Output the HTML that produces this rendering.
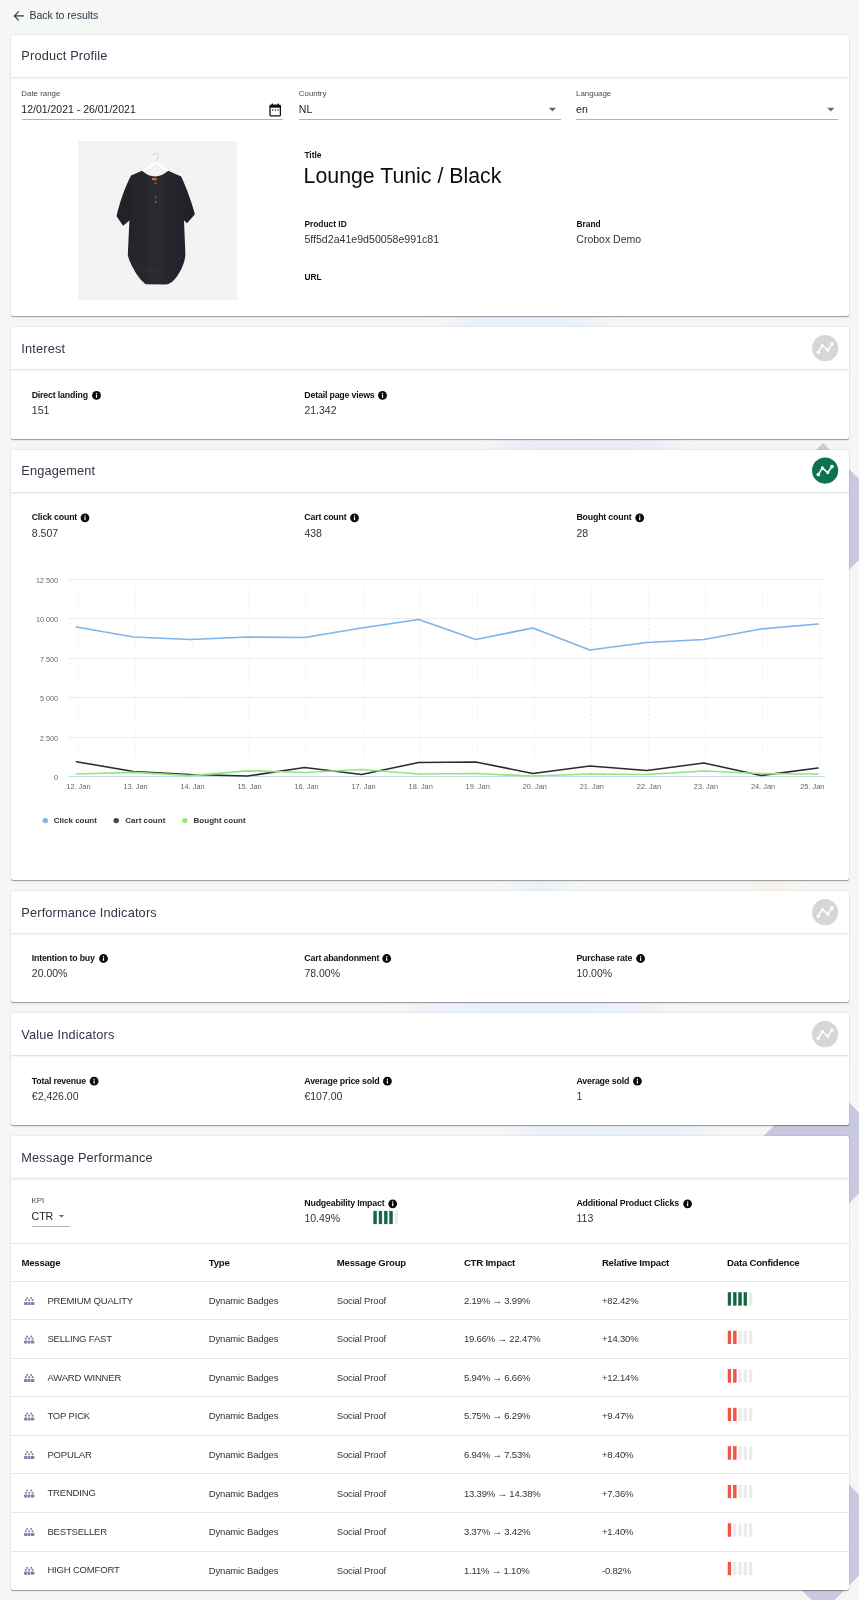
<!DOCTYPE html>
<html lang="en"><head><meta charset="utf-8"><title>Product Profile</title>
<style>
*{box-sizing:border-box}
html,body{margin:0;padding:0}
body{width:859px;height:1600px;position:relative;overflow:hidden;background:#f5f7f7;font-family:"Liberation Sans",sans-serif;color:#333}
.bg{position:absolute;left:0;top:0;width:859px;height:1600px}
.t{position:absolute;white-space:nowrap;line-height:1;display:block;opacity:.995}
.card{position:absolute;left:11px;width:838px;background:#fff;border-radius:2.5px;box-shadow:0 1.6px .8px -.8px rgba(0,0,0,.22),0 .8px .9px 0 rgba(0,0,0,.12),0 .75px 2.6px 0 rgba(0,0,0,.10)}
.card header{position:absolute;left:0;top:0;width:100%;height:43px;border-bottom:1px solid #e4e4e4;box-shadow:0 1.5px 1.5px rgba(0,0,0,.035)}
.card h2{margin:0;font-weight:400;color:#2d3648;letter-spacing:.17px}
.nav{color:#2d3648}
.lbl{font-weight:700;color:#111;letter-spacing:-.18px}
.l2{letter-spacing:0}
.val{color:#333}
.fl{color:#484848}
.fv{color:#222}
.ul{position:absolute;height:1px;background:#b2b2b2}
.ico{position:absolute;display:block}
.th{font-weight:700;color:#111;letter-spacing:-.22px}
.td{color:#333;letter-spacing:-.17px}
.row{position:absolute;left:0;width:100%;height:1px;background:#e6e6e6}
.title{color:#0c0c0c}
svg text{opacity:.995}
</style></head>
<body>
<svg class="bg" width="859" height="1600" viewBox="0 0 859 1600">
<defs><filter id="bb" x="-50%" y="-50%" width="200%" height="200%"><feGaussianBlur stdDeviation="14"/></filter></defs>
<g filter="url(#bb)"><ellipse cx="525" cy="321" rx="80" ry="22" fill="#e9f0f9"/><ellipse cx="585" cy="444" rx="95" ry="22" fill="#e9ebf6"/><ellipse cx="540" cy="885" rx="22" ry="20" fill="#e9f0f9"/><ellipse cx="770" cy="885" rx="22" ry="20" fill="#f7f1e6"/><ellipse cx="535" cy="1007" rx="135" ry="22" fill="#e9f0f9"/><ellipse cx="610" cy="1130" rx="100" ry="22" fill="#e9eff8"/></g>
<polygon points="823,443.0 899.5,519.5 823,596.0 746.5,519.5" fill="#c8c8df"/>
<polygon points="823,1076.5 899.5,1153 823,1229.5 746.5,1153" fill="#c8c8df"/>
<polygon points="823,1458.5 899.5,1535 823,1611.5 746.5,1535" fill="#c8c8df"/>
</svg>
<div class="nav">
<svg class="ico" style="left:13px;top:10px" width="13" height="13" viewBox="-0.50 -0.40 13 13"><path d="M10.4 5.5H1.2M5.3 1 0.9 5.5 5.3 10" fill="none" stroke="#2d3648" stroke-width="1.15"/></svg>
<span class="t nav" style="left:29.40px;top:10px;font-size:10.5px;">Back to results</span>
</div>
<section class="card" style="top:35px;height:281px">
<header><h2 class="t" style="left:10.30px;top:15px;font-size:12.75px;">Product Profile</h2></header>
<span class="t fl" style="left:10.30px;top:55px;font-size:7.9px;">Date range</span>
<span class="t fv" style="left:10.30px;top:69px;font-size:10.5px;">12/01/2021 - 26/01/2021</span>
<div class="ul" style="left:10.6px;top:84px;width:261.2px"></div>
<span class="t fl" style="left:287.80px;top:55px;font-size:7.9px;">Country</span>
<span class="t fv" style="left:287.80px;top:69px;font-size:10.5px;">NL</span>
<div class="ul" style="left:288.1px;top:84px;width:261.5px"></div>
<span class="t fl" style="left:565.10px;top:55px;font-size:7.9px;">Language</span>
<span class="t fv" style="left:565.10px;top:69px;font-size:10.5px;">en</span>
<div class="ul" style="left:565.4px;top:84px;width:261.9px"></div>
<svg class="ico" style="left:258px;top:68px" width="14" height="15" viewBox="0.00 0.00 14 15"><rect x="1" y="2.1" width="10.4" height="10.8" rx="1.2" fill="none" stroke="#111" stroke-width="1.3"/><rect x="1" y="2.1" width="10.4" height="2.6" fill="#111"/><rect x="2.7" y="0.5" width="1.2" height="2.5" fill="#111"/><rect x="8.6" y="0.5" width="1.2" height="2.5" fill="#111"/><circle cx="3.7" cy="7.1" r=".75" fill="#111"/><circle cx="6.5" cy="7.1" r=".75" fill="#111"/><circle cx="9.1" cy="7.1" r=".75" fill="#111"/></svg>
<svg class="ico" style="left:537px;top:72px" width="10" height="6" viewBox="-0.90 -0.70 10 6"><path d="M0 0H7.2L3.6 3.7Z" fill="#666"/></svg>
<svg class="ico" style="left:816px;top:72px" width="9" height="6" viewBox="-0.20 -0.70 9 6"><path d="M0 0H7.2L3.6 3.7Z" fill="#666"/></svg>
<svg class="ico" style="left:67px;top:106px" width="159" height="159" viewBox="0 0 159 159"><defs><linearGradient id="tg" x1="0" x2="1" y1="0" y2="0"><stop offset="0" stop-color="#202126"/><stop offset=".5" stop-color="#2a2b31"/><stop offset="1" stop-color="#1f2025"/></linearGradient><filter id="bl" x="-5%" y="-5%" width="110%" height="110%"><feGaussianBlur stdDeviation=".45"/></filter></defs><rect width="159" height="159" fill="#f3f3f3"/><g filter="url(#bl)"><path d="M73.4 15.2C74 12.4 80 11.8 80.2 14.2 80.4 17 78.5 18.5 78.1 21.3" fill="none" stroke="#c4c4c4" stroke-width=".8"/><path d="M64.5 30 78.1 21.5 90.2 30" fill="none" stroke="#fff" stroke-width="1.8" stroke-linejoin="round"/><path d="M64 29.7Q70 35 77 35.6 84 35 90.2 29.7L103.2 35.4C109 48 114 62 116.9 73.2L109 82.3 106 79.3 107.4 114C106.5 124 101 134 94.9 140.2Q91 143.4 87.5 143.4L67.6 143.2Q63 140 59.2 134C55 127 51 120 49.8 114L51.4 79.5 45.1 84.7 38.5 75.3C42 60 47 46 53 34.4Z" fill="url(#tg)"/><path d="M50.3 114C58 126 68 131 77 130.6 88 130 98 124 105 112" fill="none" stroke="#34353b" stroke-width=".7"/><rect x="73.9" y="36.9" width="4.8" height="2.3" rx=".5" fill="#e0672c"/><circle cx="77.6" cy="42.3" r=".95" fill="#7d705a"/><circle cx="77.6" cy="56.1" r=".95" fill="#7d705a"/><circle cx="77.6" cy="60.9" r=".95" fill="#7d705a"/></g></svg>
<span class="t lbl l2" style="left:293.40px;top:116px;font-size:8.4px;">Title</span>
<span class="t title" style="left:292.60px;top:131px;font-size:21.3px;">Lounge Tunic / Black</span>
<span class="t lbl l2" style="left:293.40px;top:185px;font-size:8.4px;">Product ID</span>
<span class="t val" style="left:293.40px;top:199px;font-size:10.6px;">5ff5d2a41e9d50058e991c81</span>
<span class="t lbl l2" style="left:565.50px;top:185px;font-size:8.4px;">Brand</span>
<span class="t val" style="left:565.30px;top:199px;font-size:10.5px;">Crobox Demo</span>
<span class="t lbl l2" style="left:293.40px;top:238px;font-size:8.4px;">URL</span>
</section>
<section class="card" style="top:327px;height:112px"><header><h2 class="t" style="left:10.30px;top:16px;font-size:12.75px;">Interest</h2><svg class="ico" style="left:801px;top:8px" width="28" height="28" viewBox="-0.00 -0.10 28 28"><circle cx="13.1" cy="13.1" r="13.1" fill="#d6d6d6"/><polyline points="6.30,17.10 10.40,10.40 15.80,15.10 20.00,9.00" fill="none" stroke="#fff" stroke-width="1.55" stroke-linejoin="round"/><circle cx="6.30" cy="17.10" r="1.8" fill="#fff"/><circle cx="10.40" cy="10.40" r="1.55" fill="#fff"/><circle cx="15.80" cy="15.10" r="1.55" fill="#fff"/><circle cx="20.00" cy="9.00" r="1.8" fill="#fff"/></svg></header>
<span class="t lbl" style="left:20.70px;top:64px;font-size:8.8px;">Direct landing</span><svg class="ico" style="left:81px;top:64px" width="10" height="10" viewBox="-0.10 -0.00 10 10"><circle cx="4.4" cy="4.4" r="4.4" fill="#0b0b0b"/><rect x="3.8" y="3.7" width="1.2" height="3" fill="#fff"/><rect x="3.8" y="1.9" width="1.2" height="1.2" fill="#fff"/></svg><span class="t val" style="left:20.80px;top:78px;font-size:10.5px;">151</span>
<span class="t lbl" style="left:293.30px;top:64px;font-size:8.8px;">Detail page views</span><svg class="ico" style="left:367px;top:64px" width="10" height="10" viewBox="-0.10 -0.00 10 10"><circle cx="4.4" cy="4.4" r="4.4" fill="#0b0b0b"/><rect x="3.8" y="3.7" width="1.2" height="3" fill="#fff"/><rect x="3.8" y="1.9" width="1.2" height="1.2" fill="#fff"/></svg><span class="t val" style="left:293.40px;top:78px;font-size:10.5px;">21.342</span>
</section>
<section class="card" style="top:450px;height:430px"><header><h2 class="t" style="left:10.30px;top:15px;font-size:12.75px;">Engagement</h2><svg class="ico" style="left:801px;top:7px" width="28" height="28" viewBox="-0.00 -0.50 28 28"><circle cx="13.1" cy="13.1" r="13.1" fill="#0e7150"/><polyline points="6.30,17.10 10.40,10.40 15.80,15.10 20.00,9.00" fill="none" stroke="#fff" stroke-width="1.55" stroke-linejoin="round"/><circle cx="6.30" cy="17.10" r="1.8" fill="#fff"/><circle cx="10.40" cy="10.40" r="1.55" fill="#fff"/><circle cx="15.80" cy="15.10" r="1.55" fill="#fff"/><circle cx="20.00" cy="9.00" r="1.8" fill="#fff"/></svg></header>
<span class="t lbl" style="left:20.70px;top:63px;font-size:8.8px;">Click count</span><svg class="ico" style="left:69px;top:63px" width="11" height="11" viewBox="-0.60 -0.40 11 11"><circle cx="4.4" cy="4.4" r="4.4" fill="#0b0b0b"/><rect x="3.8" y="3.7" width="1.2" height="3" fill="#fff"/><rect x="3.8" y="1.9" width="1.2" height="1.2" fill="#fff"/></svg><span class="t val" style="left:20.80px;top:78px;font-size:10.5px;">8.507</span>
<span class="t lbl" style="left:293.30px;top:63px;font-size:8.8px;">Cart count</span><svg class="ico" style="left:339px;top:63px" width="10" height="11" viewBox="-0.10 -0.40 10 11"><circle cx="4.4" cy="4.4" r="4.4" fill="#0b0b0b"/><rect x="3.8" y="3.7" width="1.2" height="3" fill="#fff"/><rect x="3.8" y="1.9" width="1.2" height="1.2" fill="#fff"/></svg><span class="t val" style="left:293.40px;top:78px;font-size:10.5px;">438</span>
<span class="t lbl" style="left:565.40px;top:63px;font-size:8.8px;">Bought count</span><svg class="ico" style="left:624px;top:63px" width="11" height="11" viewBox="-0.30 -0.40 11 11"><circle cx="4.4" cy="4.4" r="4.4" fill="#0b0b0b"/><rect x="3.8" y="3.7" width="1.2" height="3" fill="#fff"/><rect x="3.8" y="1.9" width="1.2" height="1.2" fill="#fff"/></svg><span class="t val" style="left:565.50px;top:78px;font-size:10.5px;">28</span>
<svg class="ico" style="left:0;top:110px" width="838" height="290" viewBox="11 560 838 290" font-family="Liberation Sans, sans-serif"><line x1="68.4" x2="825" y1="737.5" y2="737.5" stroke="#ececec" stroke-width="1"/><line x1="68.4" x2="825" y1="697.5" y2="697.5" stroke="#ececec" stroke-width="1"/><line x1="68.4" x2="825" y1="658.5" y2="658.5" stroke="#ececec" stroke-width="1"/><line x1="68.4" x2="825" y1="618.5" y2="618.5" stroke="#ececec" stroke-width="1"/><line x1="68.4" x2="825" y1="579.5" y2="579.5" stroke="#ececec" stroke-width="1"/><line x1="78.0" x2="78.0" y1="579" y2="776" stroke="#e9e9e9" stroke-width="1" stroke-dasharray="1.5 3"/><line x1="135.1" x2="135.1" y1="579" y2="776" stroke="#e9e9e9" stroke-width="1" stroke-dasharray="1.5 3"/><line x1="192.1" x2="192.1" y1="579" y2="776" stroke="#e9e9e9" stroke-width="1" stroke-dasharray="1.5 3"/><line x1="249.1" x2="249.1" y1="579" y2="776" stroke="#e9e9e9" stroke-width="1" stroke-dasharray="1.5 3"/><line x1="306.2" x2="306.2" y1="579" y2="776" stroke="#e9e9e9" stroke-width="1" stroke-dasharray="1.5 3"/><line x1="363.2" x2="363.2" y1="579" y2="776" stroke="#e9e9e9" stroke-width="1" stroke-dasharray="1.5 3"/><line x1="420.3" x2="420.3" y1="579" y2="776" stroke="#e9e9e9" stroke-width="1" stroke-dasharray="1.5 3"/><line x1="477.3" x2="477.3" y1="579" y2="776" stroke="#e9e9e9" stroke-width="1" stroke-dasharray="1.5 3"/><line x1="534.4" x2="534.4" y1="579" y2="776" stroke="#e9e9e9" stroke-width="1" stroke-dasharray="1.5 3"/><line x1="591.4" x2="591.4" y1="579" y2="776" stroke="#e9e9e9" stroke-width="1" stroke-dasharray="1.5 3"/><line x1="648.5" x2="648.5" y1="579" y2="776" stroke="#e9e9e9" stroke-width="1" stroke-dasharray="1.5 3"/><line x1="705.5" x2="705.5" y1="579" y2="776" stroke="#e9e9e9" stroke-width="1" stroke-dasharray="1.5 3"/><line x1="762.6" x2="762.6" y1="579" y2="776" stroke="#e9e9e9" stroke-width="1" stroke-dasharray="1.5 3"/><line x1="819.6" x2="819.6" y1="579" y2="776" stroke="#e9e9e9" stroke-width="1" stroke-dasharray="1.5 3"/><line x1="68.4" x2="825" y1="776.5" y2="776.5" stroke="#ccd6eb" stroke-width="1"/><text x="57.9" y="779.8" text-anchor="end" font-size="7.2" fill="#666">0</text><text x="57.9" y="740.8" text-anchor="end" font-size="7.2" fill="#666">2 500</text><text x="57.9" y="700.8" text-anchor="end" font-size="7.2" fill="#666">5 000</text><text x="57.9" y="661.8" text-anchor="end" font-size="7.2" fill="#666">7 500</text><text x="57.9" y="621.8" text-anchor="end" font-size="7.2" fill="#666">10 000</text><text x="57.9" y="582.8" text-anchor="end" font-size="7.2" fill="#666">12 500</text><text x="78.4" y="789" text-anchor="middle" font-size="7.4" fill="#666">12. Jan</text><text x="135.5" y="789" text-anchor="middle" font-size="7.4" fill="#666">13. Jan</text><text x="192.5" y="789" text-anchor="middle" font-size="7.4" fill="#666">14. Jan</text><text x="249.5" y="789" text-anchor="middle" font-size="7.4" fill="#666">15. Jan</text><text x="306.6" y="789" text-anchor="middle" font-size="7.4" fill="#666">16. Jan</text><text x="363.6" y="789" text-anchor="middle" font-size="7.4" fill="#666">17. Jan</text><text x="420.7" y="789" text-anchor="middle" font-size="7.4" fill="#666">18. Jan</text><text x="477.7" y="789" text-anchor="middle" font-size="7.4" fill="#666">19. Jan</text><text x="534.8" y="789" text-anchor="middle" font-size="7.4" fill="#666">20. Jan</text><text x="591.8" y="789" text-anchor="middle" font-size="7.4" fill="#666">21. Jan</text><text x="648.9" y="789" text-anchor="middle" font-size="7.4" fill="#666">22. Jan</text><text x="705.9" y="789" text-anchor="middle" font-size="7.4" fill="#666">23. Jan</text><text x="763.0" y="789" text-anchor="middle" font-size="7.4" fill="#666">24. Jan</text><text x="824.4" y="789" text-anchor="end" font-size="7.4" fill="#666">25. Jan</text><polyline points="76.4,627.0 133.5,637.0 190.5,639.5 247.5,637.0 304.6,637.5 361.6,628.0 418.7,619.5 475.7,639.5 532.8,628.0 589.8,650.0 646.9,642.5 703.9,639.5 761.0,629.0 818.0,624.0" fill="none" stroke="#7cb5ec" stroke-width="1.75" stroke-linejoin="round" stroke-linecap="round"/><polyline points="76.4,761.7 133.5,771.5 190.5,774.5 247.5,776.1 304.6,767.5 361.6,774.5 418.7,762.5 475.7,762.0 532.8,773.5 589.8,766.0 646.9,770.5 703.9,763.0 761.0,775.5 818.0,768.0" fill="none" stroke="#2b2b2e" stroke-width="1.55" stroke-linejoin="round" stroke-linecap="round"/><polyline points="76.4,774.0 133.5,772.4 190.5,775.7 247.5,770.8 304.6,772.5 361.6,769.5 418.7,774.0 475.7,773.5 532.8,776.0 589.8,774.0 646.9,774.5 703.9,771.0 761.0,773.5 818.0,774.0" fill="none" stroke="#8ee87a" stroke-width="1.75" stroke-linejoin="round" stroke-linecap="round"/><circle cx="45.3" cy="820.6" r="2.7" fill="#7cb5ec"/><text x="53.800000000000004" y="823" font-size="8" font-weight="700" fill="#333">Click count</text><circle cx="116.2" cy="820.6" r="2.7" fill="#434348"/><text x="125.3" y="823" font-size="8" font-weight="700" fill="#333">Cart count</text><circle cx="184.8" cy="820.6" r="2.7" fill="#90ed7d"/><text x="193.6" y="823" font-size="8" font-weight="700" fill="#333">Bought count</text></svg>
</section>
<section class="card" style="top:891px;height:111px"><header><h2 class="t" style="left:10.30px;top:16px;font-size:12.75px;">Performance Indicators</h2><svg class="ico" style="left:801px;top:8px" width="28" height="28" viewBox="-0.00 -0.10 28 28"><circle cx="13.1" cy="13.1" r="13.1" fill="#d6d6d6"/><polyline points="6.30,17.10 10.40,10.40 15.80,15.10 20.00,9.00" fill="none" stroke="#fff" stroke-width="1.55" stroke-linejoin="round"/><circle cx="6.30" cy="17.10" r="1.8" fill="#fff"/><circle cx="10.40" cy="10.40" r="1.55" fill="#fff"/><circle cx="15.80" cy="15.10" r="1.55" fill="#fff"/><circle cx="20.00" cy="9.00" r="1.8" fill="#fff"/></svg></header>
<span class="t lbl" style="left:20.70px;top:63px;font-size:8.8px;">Intention to buy</span><svg class="ico" style="left:88px;top:63px" width="10" height="10" viewBox="-0.10 -0.10 10 10"><circle cx="4.4" cy="4.4" r="4.4" fill="#0b0b0b"/><rect x="3.8" y="3.7" width="1.2" height="3" fill="#fff"/><rect x="3.8" y="1.9" width="1.2" height="1.2" fill="#fff"/></svg><span class="t val" style="left:20.80px;top:77px;font-size:10.5px;">20.00%</span>
<span class="t lbl" style="left:293.30px;top:63px;font-size:8.8px;">Cart abandonment</span><svg class="ico" style="left:371px;top:63px" width="11" height="10" viewBox="-0.30 -0.10 11 10"><circle cx="4.4" cy="4.4" r="4.4" fill="#0b0b0b"/><rect x="3.8" y="3.7" width="1.2" height="3" fill="#fff"/><rect x="3.8" y="1.9" width="1.2" height="1.2" fill="#fff"/></svg><span class="t val" style="left:293.40px;top:77px;font-size:10.5px;">78.00%</span>
<span class="t lbl" style="left:565.40px;top:63px;font-size:8.8px;">Purchase rate</span><svg class="ico" style="left:625px;top:63px" width="11" height="10" viewBox="-0.20 -0.10 11 10"><circle cx="4.4" cy="4.4" r="4.4" fill="#0b0b0b"/><rect x="3.8" y="3.7" width="1.2" height="3" fill="#fff"/><rect x="3.8" y="1.9" width="1.2" height="1.2" fill="#fff"/></svg><span class="t val" style="left:565.50px;top:77px;font-size:10.5px;">10.00%</span>
</section>
<section class="card" style="top:1013px;height:112px"><header><h2 class="t" style="left:10.30px;top:16px;font-size:12.75px;">Value Indicators</h2><svg class="ico" style="left:801px;top:8px" width="28" height="28" viewBox="-0.00 -0.10 28 28"><circle cx="13.1" cy="13.1" r="13.1" fill="#d6d6d6"/><polyline points="6.30,17.10 10.40,10.40 15.80,15.10 20.00,9.00" fill="none" stroke="#fff" stroke-width="1.55" stroke-linejoin="round"/><circle cx="6.30" cy="17.10" r="1.8" fill="#fff"/><circle cx="10.40" cy="10.40" r="1.55" fill="#fff"/><circle cx="15.80" cy="15.10" r="1.55" fill="#fff"/><circle cx="20.00" cy="9.00" r="1.8" fill="#fff"/></svg></header>
<span class="t lbl" style="left:20.70px;top:64px;font-size:8.8px;">Total revenue</span><svg class="ico" style="left:78px;top:63px" width="11" height="11" viewBox="-0.70 -0.80 11 11"><circle cx="4.4" cy="4.4" r="4.4" fill="#0b0b0b"/><rect x="3.8" y="3.7" width="1.2" height="3" fill="#fff"/><rect x="3.8" y="1.9" width="1.2" height="1.2" fill="#fff"/></svg><span class="t val" style="left:20.80px;top:78px;font-size:10.5px;">€2,426.00</span>
<span class="t lbl" style="left:293.30px;top:64px;font-size:8.8px;">Average price sold</span><svg class="ico" style="left:372px;top:63px" width="10" height="11" viewBox="-0.00 -0.80 10 11"><circle cx="4.4" cy="4.4" r="4.4" fill="#0b0b0b"/><rect x="3.8" y="3.7" width="1.2" height="3" fill="#fff"/><rect x="3.8" y="1.9" width="1.2" height="1.2" fill="#fff"/></svg><span class="t val" style="left:293.40px;top:78px;font-size:10.5px;">€107.00</span>
<span class="t lbl" style="left:565.40px;top:64px;font-size:8.8px;">Average sold</span><svg class="ico" style="left:622px;top:63px" width="10" height="11" viewBox="-0.00 -0.80 10 11"><circle cx="4.4" cy="4.4" r="4.4" fill="#0b0b0b"/><rect x="3.8" y="3.7" width="1.2" height="3" fill="#fff"/><rect x="3.8" y="1.9" width="1.2" height="1.2" fill="#fff"/></svg><span class="t val" style="left:565.50px;top:78px;font-size:10.5px;">1</span>
</section>
<section class="card" style="top:1136px;height:454px"><header><h2 class="t" style="left:10.30px;top:16px;font-size:12.75px;">Message Performance</h2></header>
<span class="t fl" style="left:20.60px;top:61px;font-size:7.9px;">KPI</span>
<span class="t fv" style="left:20.50px;top:75px;font-size:10.6px;">CTR</span>
<svg class="ico" style="left:47px;top:78px" width="8" height="5" viewBox="-0.80 -0.90 8 5"><path d="M0 0H5.3L2.65 2.7Z" fill="#666"/></svg>
<div class="ul" style="left:20.9px;top:90px;width:38.4px"></div>
<span class="t lbl" style="left:293.30px;top:63px;font-size:8.8px;">Nudgeability Impact</span><svg class="ico" style="left:377px;top:63px" width="11" height="11" viewBox="-0.30 -0.40 11 11"><circle cx="4.4" cy="4.4" r="4.4" fill="#0b0b0b"/><rect x="3.8" y="3.7" width="1.2" height="3" fill="#fff"/><rect x="3.8" y="1.9" width="1.2" height="1.2" fill="#fff"/></svg><span class="t val" style="left:293.40px;top:77px;font-size:10.5px;">10.49%</span>
<svg class="ico" style="left:362px;top:74px" width="27" height="16" viewBox="-0.50 -0.90 27 16"><rect x="0.25" y=".25" width="2.8" height="12.7" fill="#0b6a44" stroke="#17582a" stroke-width=".5"/><rect x="5.55" y=".25" width="2.8" height="12.7" fill="#0b6a44" stroke="#17582a" stroke-width=".5"/><rect x="10.85" y=".25" width="2.8" height="12.7" fill="#0b6a44" stroke="#17582a" stroke-width=".5"/><rect x="16.15" y=".25" width="2.8" height="12.7" fill="#0b6a44" stroke="#17582a" stroke-width=".5"/><rect x="21.20" y="0" width="3.3" height="13.2" fill="#ebebeb"/></svg>
<span class="t lbl" style="left:565.40px;top:63px;font-size:8.8px;">Additional Product Clicks</span><svg class="ico" style="left:672px;top:63px" width="11" height="11" viewBox="-0.20 -0.40 11 11"><circle cx="4.4" cy="4.4" r="4.4" fill="#0b0b0b"/><rect x="3.8" y="3.7" width="1.2" height="3" fill="#fff"/><rect x="3.8" y="1.9" width="1.2" height="1.2" fill="#fff"/></svg><span class="t val" style="left:565.50px;top:77px;font-size:10.5px;">113</span>
<div class="row" style="top:107px"></div>
<span class="t th" style="left:10.40px;top:122px;font-size:9.6px;">Message</span>
<span class="t th" style="left:197.80px;top:122px;font-size:9.6px;">Type</span>
<span class="t th" style="left:325.80px;top:122px;font-size:9.6px;">Message Group</span>
<span class="t th" style="left:452.90px;top:122px;font-size:9.6px;">CTR Impact</span>
<span class="t th" style="left:590.90px;top:122px;font-size:9.6px;">Relative Impact</span>
<span class="t th" style="left:716.10px;top:122px;font-size:9.6px;">Data Confidence</span>
<div class="row" style="top:145px"></div>
<svg class="ico" style="left:12px;top:160px" width="13" height="11" viewBox="-0.90 -0.80 13 11"><g fill="#7272a2" opacity=".9"><circle cx="3.3" cy="1.2" r="1"/><circle cx="7.3" cy="1.2" r="1"/><circle cx="1.9" cy="3.3" r="1.05"/><circle cx="5.3" cy="3.3" r="1.05"/><circle cx="8.7" cy="3.3" r="1.05"/><rect x="0.2" y="5.1" width="3.4" height="3.1" rx=".5"/><rect x="4.1" y="5.1" width="2.4" height="3.1" rx=".5"/><rect x="7" y="5.1" width="3.4" height="3.1" rx=".5"/></g></svg>
<span class="t td" style="left:36.40px;top:160px;font-size:9.5px;">PREMIUM QUALITY</span>
<span class="t td" style="left:197.80px;top:160px;font-size:9.5px;">Dynamic Badges</span>
<span class="t td" style="left:325.80px;top:160px;font-size:9.5px;">Social Proof</span>
<span class="t td" style="left:452.90px;top:160px;font-size:9.5px;">2.19% → 3.99%</span>
<span class="t td" style="left:590.90px;top:160px;font-size:9.5px;">+82.42%</span>
<svg class="ico" style="left:716px;top:156px" width="27" height="15" viewBox="-0.80 -0.30 27 15"><rect x="0.25" y=".25" width="2.8" height="12.7" fill="#0b6a44" stroke="#17582a" stroke-width=".5"/><rect x="5.55" y=".25" width="2.8" height="12.7" fill="#0b6a44" stroke="#17582a" stroke-width=".5"/><rect x="10.85" y=".25" width="2.8" height="12.7" fill="#0b6a44" stroke="#17582a" stroke-width=".5"/><rect x="16.15" y=".25" width="2.8" height="12.7" fill="#0b6a44" stroke="#17582a" stroke-width=".5"/><rect x="21.20" y="0" width="3.3" height="13.2" fill="#ebebeb"/></svg>
<div class="row" style="top:183px"></div>
<svg class="ico" style="left:12px;top:199px" width="13" height="10" viewBox="-0.90 -0.32 13 10"><g fill="#7272a2" opacity=".9"><circle cx="3.3" cy="1.2" r="1"/><circle cx="7.3" cy="1.2" r="1"/><circle cx="1.9" cy="3.3" r="1.05"/><circle cx="5.3" cy="3.3" r="1.05"/><circle cx="8.7" cy="3.3" r="1.05"/><rect x="0.2" y="5.1" width="3.4" height="3.1" rx=".5"/><rect x="4.1" y="5.1" width="2.4" height="3.1" rx=".5"/><rect x="7" y="5.1" width="3.4" height="3.1" rx=".5"/></g></svg>
<span class="t td" style="left:36.40px;top:198px;font-size:9.5px;">SELLING FAST</span>
<span class="t td" style="left:197.80px;top:198px;font-size:9.5px;">Dynamic Badges</span>
<span class="t td" style="left:325.80px;top:198px;font-size:9.5px;">Social Proof</span>
<span class="t td" style="left:452.90px;top:198px;font-size:9.5px;">19.66% → 22.47%</span>
<span class="t td" style="left:590.90px;top:198px;font-size:9.5px;">+14.30%</span>
<svg class="ico" style="left:716px;top:194px" width="27" height="16" viewBox="-0.80 -0.82 27 16"><rect x="0.25" y=".25" width="2.8" height="12.7" fill="#f0594b" stroke="#ea3320" stroke-width=".5"/><rect x="5.55" y=".25" width="2.8" height="12.7" fill="#f0594b" stroke="#ea3320" stroke-width=".5"/><rect x="10.60" y="0" width="3.3" height="13.2" fill="#ebebeb"/><rect x="15.90" y="0" width="3.3" height="13.2" fill="#ebebeb"/><rect x="21.20" y="0" width="3.3" height="13.2" fill="#ebebeb"/></svg>
<div class="row" style="top:222px"></div>
<svg class="ico" style="left:12px;top:237px" width="13" height="11" viewBox="-0.90 -0.84 13 11"><g fill="#7272a2" opacity=".9"><circle cx="3.3" cy="1.2" r="1"/><circle cx="7.3" cy="1.2" r="1"/><circle cx="1.9" cy="3.3" r="1.05"/><circle cx="5.3" cy="3.3" r="1.05"/><circle cx="8.7" cy="3.3" r="1.05"/><rect x="0.2" y="5.1" width="3.4" height="3.1" rx=".5"/><rect x="4.1" y="5.1" width="2.4" height="3.1" rx=".5"/><rect x="7" y="5.1" width="3.4" height="3.1" rx=".5"/></g></svg>
<span class="t td" style="left:36.40px;top:237px;font-size:9.5px;">AWARD WINNER</span>
<span class="t td" style="left:197.80px;top:237px;font-size:9.5px;">Dynamic Badges</span>
<span class="t td" style="left:325.80px;top:237px;font-size:9.5px;">Social Proof</span>
<span class="t td" style="left:452.90px;top:237px;font-size:9.5px;">5.94% → 6.66%</span>
<span class="t td" style="left:590.90px;top:237px;font-size:9.5px;">+12.14%</span>
<svg class="ico" style="left:716px;top:233px" width="27" height="15" viewBox="-0.80 -0.34 27 15"><rect x="0.25" y=".25" width="2.8" height="12.7" fill="#f0594b" stroke="#ea3320" stroke-width=".5"/><rect x="5.55" y=".25" width="2.8" height="12.7" fill="#f0594b" stroke="#ea3320" stroke-width=".5"/><rect x="10.60" y="0" width="3.3" height="13.2" fill="#ebebeb"/><rect x="15.90" y="0" width="3.3" height="13.2" fill="#ebebeb"/><rect x="21.20" y="0" width="3.3" height="13.2" fill="#ebebeb"/></svg>
<div class="row" style="top:260px"></div>
<svg class="ico" style="left:12px;top:276px" width="13" height="10" viewBox="-0.90 -0.36 13 10"><g fill="#7272a2" opacity=".9"><circle cx="3.3" cy="1.2" r="1"/><circle cx="7.3" cy="1.2" r="1"/><circle cx="1.9" cy="3.3" r="1.05"/><circle cx="5.3" cy="3.3" r="1.05"/><circle cx="8.7" cy="3.3" r="1.05"/><rect x="0.2" y="5.1" width="3.4" height="3.1" rx=".5"/><rect x="4.1" y="5.1" width="2.4" height="3.1" rx=".5"/><rect x="7" y="5.1" width="3.4" height="3.1" rx=".5"/></g></svg>
<span class="t td" style="left:36.40px;top:275px;font-size:9.5px;">TOP PICK</span>
<span class="t td" style="left:197.80px;top:275px;font-size:9.5px;">Dynamic Badges</span>
<span class="t td" style="left:325.80px;top:275px;font-size:9.5px;">Social Proof</span>
<span class="t td" style="left:452.90px;top:275px;font-size:9.5px;">5.75% → 6.29%</span>
<span class="t td" style="left:590.90px;top:275px;font-size:9.5px;">+9.47%</span>
<svg class="ico" style="left:716px;top:271px" width="27" height="16" viewBox="-0.80 -0.86 27 16"><rect x="0.25" y=".25" width="2.8" height="12.7" fill="#f0594b" stroke="#ea3320" stroke-width=".5"/><rect x="5.55" y=".25" width="2.8" height="12.7" fill="#f0594b" stroke="#ea3320" stroke-width=".5"/><rect x="10.60" y="0" width="3.3" height="13.2" fill="#ebebeb"/><rect x="15.90" y="0" width="3.3" height="13.2" fill="#ebebeb"/><rect x="21.20" y="0" width="3.3" height="13.2" fill="#ebebeb"/></svg>
<div class="row" style="top:299px"></div>
<svg class="ico" style="left:12px;top:314px" width="13" height="11" viewBox="-0.90 -0.88 13 11"><g fill="#7272a2" opacity=".9"><circle cx="3.3" cy="1.2" r="1"/><circle cx="7.3" cy="1.2" r="1"/><circle cx="1.9" cy="3.3" r="1.05"/><circle cx="5.3" cy="3.3" r="1.05"/><circle cx="8.7" cy="3.3" r="1.05"/><rect x="0.2" y="5.1" width="3.4" height="3.1" rx=".5"/><rect x="4.1" y="5.1" width="2.4" height="3.1" rx=".5"/><rect x="7" y="5.1" width="3.4" height="3.1" rx=".5"/></g></svg>
<span class="t td" style="left:36.40px;top:314px;font-size:9.5px;">POPULAR</span>
<span class="t td" style="left:197.80px;top:314px;font-size:9.5px;">Dynamic Badges</span>
<span class="t td" style="left:325.80px;top:314px;font-size:9.5px;">Social Proof</span>
<span class="t td" style="left:452.90px;top:314px;font-size:9.5px;">6.94% → 7.53%</span>
<span class="t td" style="left:590.90px;top:314px;font-size:9.5px;">+8.40%</span>
<svg class="ico" style="left:716px;top:310px" width="27" height="15" viewBox="-0.80 -0.38 27 15"><rect x="0.25" y=".25" width="2.8" height="12.7" fill="#f0594b" stroke="#ea3320" stroke-width=".5"/><rect x="5.55" y=".25" width="2.8" height="12.7" fill="#f0594b" stroke="#ea3320" stroke-width=".5"/><rect x="10.60" y="0" width="3.3" height="13.2" fill="#ebebeb"/><rect x="15.90" y="0" width="3.3" height="13.2" fill="#ebebeb"/><rect x="21.20" y="0" width="3.3" height="13.2" fill="#ebebeb"/></svg>
<div class="row" style="top:337px"></div>
<svg class="ico" style="left:12px;top:353px" width="13" height="10" viewBox="-0.90 -0.40 13 10"><g fill="#7272a2" opacity=".9"><circle cx="3.3" cy="1.2" r="1"/><circle cx="7.3" cy="1.2" r="1"/><circle cx="1.9" cy="3.3" r="1.05"/><circle cx="5.3" cy="3.3" r="1.05"/><circle cx="8.7" cy="3.3" r="1.05"/><rect x="0.2" y="5.1" width="3.4" height="3.1" rx=".5"/><rect x="4.1" y="5.1" width="2.4" height="3.1" rx=".5"/><rect x="7" y="5.1" width="3.4" height="3.1" rx=".5"/></g></svg>
<span class="t td" style="left:36.40px;top:352px;font-size:9.5px;">TRENDING</span>
<span class="t td" style="left:197.80px;top:353px;font-size:9.5px;">Dynamic Badges</span>
<span class="t td" style="left:325.80px;top:353px;font-size:9.5px;">Social Proof</span>
<span class="t td" style="left:452.90px;top:353px;font-size:9.5px;">13.39% → 14.38%</span>
<span class="t td" style="left:590.90px;top:353px;font-size:9.5px;">+7.36%</span>
<svg class="ico" style="left:716px;top:348px" width="27" height="16" viewBox="-0.80 -0.90 27 16"><rect x="0.25" y=".25" width="2.8" height="12.7" fill="#f0594b" stroke="#ea3320" stroke-width=".5"/><rect x="5.55" y=".25" width="2.8" height="12.7" fill="#f0594b" stroke="#ea3320" stroke-width=".5"/><rect x="10.60" y="0" width="3.3" height="13.2" fill="#ebebeb"/><rect x="15.90" y="0" width="3.3" height="13.2" fill="#ebebeb"/><rect x="21.20" y="0" width="3.3" height="13.2" fill="#ebebeb"/></svg>
<div class="row" style="top:376px"></div>
<svg class="ico" style="left:12px;top:391px" width="13" height="11" viewBox="-0.90 -0.92 13 11"><g fill="#7272a2" opacity=".9"><circle cx="3.3" cy="1.2" r="1"/><circle cx="7.3" cy="1.2" r="1"/><circle cx="1.9" cy="3.3" r="1.05"/><circle cx="5.3" cy="3.3" r="1.05"/><circle cx="8.7" cy="3.3" r="1.05"/><rect x="0.2" y="5.1" width="3.4" height="3.1" rx=".5"/><rect x="4.1" y="5.1" width="2.4" height="3.1" rx=".5"/><rect x="7" y="5.1" width="3.4" height="3.1" rx=".5"/></g></svg>
<span class="t td" style="left:36.40px;top:391px;font-size:9.5px;">BESTSELLER</span>
<span class="t td" style="left:197.80px;top:391px;font-size:9.5px;">Dynamic Badges</span>
<span class="t td" style="left:325.80px;top:391px;font-size:9.5px;">Social Proof</span>
<span class="t td" style="left:452.90px;top:391px;font-size:9.5px;">3.37% → 3.42%</span>
<span class="t td" style="left:590.90px;top:391px;font-size:9.5px;">+1.40%</span>
<svg class="ico" style="left:716px;top:387px" width="27" height="15" viewBox="-0.80 -0.42 27 15"><rect x="0.25" y=".25" width="2.8" height="12.7" fill="#f0594b" stroke="#ea3320" stroke-width=".5"/><rect x="5.30" y="0" width="3.3" height="13.2" fill="#ebebeb"/><rect x="10.60" y="0" width="3.3" height="13.2" fill="#ebebeb"/><rect x="15.90" y="0" width="3.3" height="13.2" fill="#ebebeb"/><rect x="21.20" y="0" width="3.3" height="13.2" fill="#ebebeb"/></svg>
<div class="row" style="top:415px"></div>
<svg class="ico" style="left:12px;top:430px" width="13" height="10" viewBox="-0.90 -0.44 13 10"><g fill="#7272a2" opacity=".9"><circle cx="3.3" cy="1.2" r="1"/><circle cx="7.3" cy="1.2" r="1"/><circle cx="1.9" cy="3.3" r="1.05"/><circle cx="5.3" cy="3.3" r="1.05"/><circle cx="8.7" cy="3.3" r="1.05"/><rect x="0.2" y="5.1" width="3.4" height="3.1" rx=".5"/><rect x="4.1" y="5.1" width="2.4" height="3.1" rx=".5"/><rect x="7" y="5.1" width="3.4" height="3.1" rx=".5"/></g></svg>
<span class="t td" style="left:36.40px;top:429px;font-size:9.5px;">HIGH COMFORT</span>
<span class="t td" style="left:197.80px;top:430px;font-size:9.5px;">Dynamic Badges</span>
<span class="t td" style="left:325.80px;top:430px;font-size:9.5px;">Social Proof</span>
<span class="t td" style="left:452.90px;top:430px;font-size:9.5px;">1.11% → 1.10%</span>
<span class="t td" style="left:590.90px;top:430px;font-size:9.5px;">-0.82%</span>
<svg class="ico" style="left:716px;top:425px" width="27" height="16" viewBox="-0.80 -0.94 27 16"><rect x="0.25" y=".25" width="2.8" height="12.7" fill="#f0594b" stroke="#ea3320" stroke-width=".5"/><rect x="5.30" y="0" width="3.3" height="13.2" fill="#ebebeb"/><rect x="10.60" y="0" width="3.3" height="13.2" fill="#ebebeb"/><rect x="15.90" y="0" width="3.3" height="13.2" fill="#ebebeb"/><rect x="21.20" y="0" width="3.3" height="13.2" fill="#ebebeb"/></svg>
</section>
</body></html>
